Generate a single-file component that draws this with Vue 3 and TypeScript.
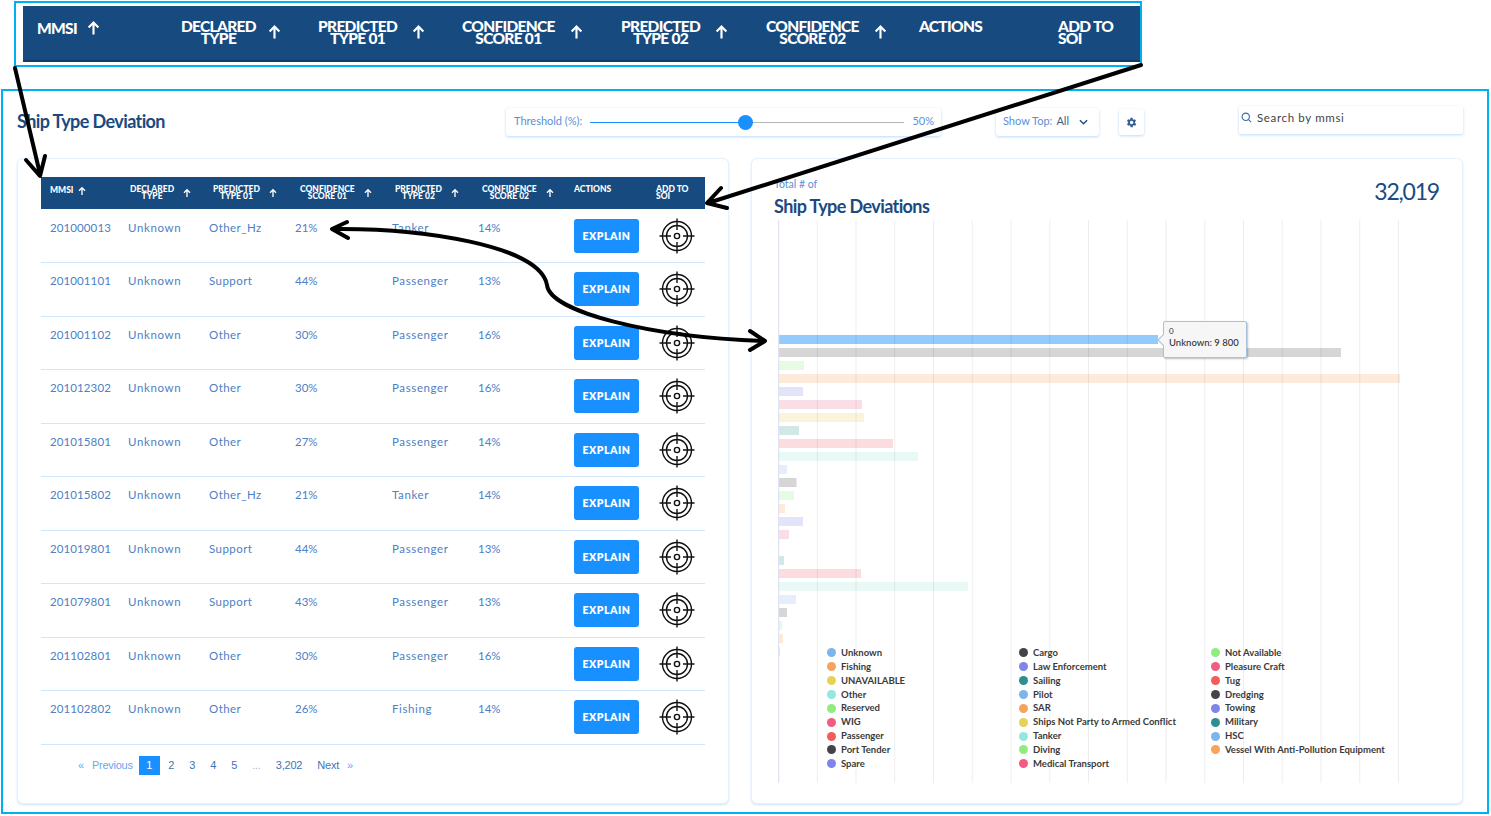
<script setup lang="ts">
interface Row {
  mmsi: string
  declared: string
  type1: string
  score1: string
  type2: string
  score2: string
}

const headers = [
  { lines: ['MMSI'], sort: true },
  { lines: ['DECLARED', 'TYPE'], sort: true },
  { lines: ['PREDICTED', 'TYPE 01'], sort: true },
  { lines: ['CONFIDENCE', 'SCORE 01'], sort: true },
  { lines: ['PREDICTED', 'TYPE 02'], sort: true },
  { lines: ['CONFIDENCE', 'SCORE 02'], sort: true },
  { lines: ['ACTIONS'], sort: false, left: true },
  { lines: ['ADD TO', 'SOI'], sort: false, left: true },
]

const rows: Row[] = [
  { mmsi: '201000013', declared: 'Unknown', type1: 'Other_Hz', score1: '21%', type2: 'Tanker', score2: '14%' },
  { mmsi: '201001101', declared: 'Unknown', type1: 'Support', score1: '44%', type2: 'Passenger', score2: '13%' },
  { mmsi: '201001102', declared: 'Unknown', type1: 'Other', score1: '30%', type2: 'Passenger', score2: '16%' },
  { mmsi: '201012302', declared: 'Unknown', type1: 'Other', score1: '30%', type2: 'Passenger', score2: '16%' },
  { mmsi: '201015801', declared: 'Unknown', type1: 'Other', score1: '27%', type2: 'Passenger', score2: '14%' },
  { mmsi: '201015802', declared: 'Unknown', type1: 'Other_Hz', score1: '21%', type2: 'Tanker', score2: '14%' },
  { mmsi: '201019801', declared: 'Unknown', type1: 'Support', score1: '44%', type2: 'Passenger', score2: '13%' },
  { mmsi: '201079801', declared: 'Unknown', type1: 'Support', score1: '43%', type2: 'Passenger', score2: '13%' },
  { mmsi: '201102801', declared: 'Unknown', type1: 'Other', score1: '30%', type2: 'Passenger', score2: '16%' },
  { mmsi: '201102802', declared: 'Unknown', type1: 'Other', score1: '26%', type2: 'Fishing', score2: '14%' },
]

const pages = ['2', '3', '4', '5']

// bar ends are page x values, the chart's zero line sits at x=778
const barEnds = [1158, 1341, 804, 1400, 803, 862, 864, 799, 893, 918, 787, 796.5, 794, 785, 803, 789, 778, 784, 861, 968, 796, 787, 782, 783, 780]
const barColors = ['#e4effb', '#d6d6d6', '#e6fbe3', '#fdeadb', '#e3e3f9', '#fbdde6', '#faf5da', '#d2e8e7', '#fbdcdf', '#e8f9f6']
const bars = barEnds.map((end, i) => ({
  y: 115 + i * 13,
  width: end - 778,
  // only the hovered bar keeps its full colour
  color: i === 0 ? '#92cbfc' : barColors[i % 10],
}))
const gridLines = Array.from({ length: 17 }, (_, i) => i * 38.75 + 0.5)

const legend: [string, string][] = [
  ['Unknown', '#7cb5ec'], ['Fishing', '#f7a35c'], ['UNAVAILABLE', '#e4d354'], ['Other', '#91e8e1'], ['Reserved', '#90ed7d'],
  ['WIG', '#f15c80'], ['Passenger', '#f45b5b'], ['Port Tender', '#434348'], ['Spare', '#8085e9'],
  ['Cargo', '#434348'], ['Law Enforcement', '#8085e9'], ['Sailing', '#2b908f'], ['Pilot', '#7cb5ec'], ['SAR', '#f7a35c'],
  ['Ships Not Party to Armed Conflict', '#e4d354'], ['Tanker', '#91e8e1'], ['Diving', '#90ed7d'], ['Medical Transport', '#f15c80'],
  ['Not Available', '#90ed7d'], ['Pleasure Craft', '#f15c80'], ['Tug', '#f45b5b'], ['Dredging', '#434348'], ['Towing', '#8085e9'],
  ['Military', '#2b908f'], ['HSC', '#7cb5ec'], ['Vessel With Anti-Pollution Equipment', '#f7a35c'],
]
</script>

<template>
  <div class="page">
    <div class="callout">
      <div class="thead thead-big">
        <div v-for="h in headers" :key="h.lines.join()" class="th">
          <span class="th-text" :class="{ left: h.left }">
            <span v-for="l in h.lines" :key="l">{{ l }}</span>
          </span>
          <svg v-if="h.sort" class="sort" viewBox="0 0 12 14">
            <path d="M6 13V2M1.500 6.500 6 2l4.500 4.500" fill="none" stroke="#fff" stroke-width="2" />
          </svg>
        </div>
      </div>
    </div>

    <div class="frame">
      <div class="toolbar">
        <h1 class="title">Ship Type Deviation</h1>
        <div class="box threshold">
          <span class="lift">Threshold (%):</span>
          <div class="slider">
            <span class="thumb"></span>
          </div>
          <span class="lift">50%</span>
        </div>
        <div class="box show-top">
          <span class="lift">Show Top:</span>
          <b class="lift">All</b>
          <svg viewBox="0 0 10 6" class="chevron">
            <path d="M1 1l4 4 4-4" fill="none" stroke="#1f4f85" stroke-width="1.600" />
          </svg>
        </div>
        <div class="box gear">
          <svg viewBox="1.150 0 24 24">
            <path
              fill="#2f5f94"
              d="M19.400 13a7.500 7.500 0 0 0 0-2l2.100-1.600-2-3.500-2.500 1a7.500 7.500 0 0 0-1.700-1L15.400 3.200h-4l-.4 2.700a7.500 7.500 0 0 0-1.700 1l-2.500-1-2 3.500L6.900 11a7.500 7.500 0 0 0 0 2l-2.100 1.600 2 3.500 2.500-1a7.500 7.500 0 0 0 1.700 1l.4 2.700h4l.4-2.700a7.500 7.500 0 0 0 1.700-1l2.500 1 2-3.500zM13.400 15.200a3.200 3.200 0 1 1 0-6.400 3.200 3.200 0 0 1 0 6.400z"
            />
          </svg>
        </div>
        <div class="box search">
          <svg viewBox="0 0 12 12" class="search-icon">
            <circle cx="5.200" cy="5.200" r="4" fill="none" stroke="#3a6ea5" stroke-width="1.200" />
            <path d="M8.200 8.200 11 11" stroke="#3a6ea5" stroke-width="1.200" />
          </svg>
          <span>Search by mmsi</span>
        </div>
      </div>

      <div class="cards">
        <section class="card table-card">
          <div class="thead thead-small">
            <div v-for="h in headers" :key="h.lines.join()" class="th">
              <span class="th-text" :class="{ left: h.left }">
                <span v-for="l in h.lines" :key="l">{{ l }}</span>
              </span>
              <svg v-if="h.sort" class="sort" viewBox="0 0 12 14">
                <path d="M6 13V2M1.500 6.500 6 2l4.500 4.500" fill="none" stroke="#fff" stroke-width="2" />
              </svg>
            </div>
          </div>
          <div v-for="r in rows" :key="r.mmsi" class="row">
            <span class="num">{{ r.mmsi }}</span>
            <span>{{ r.declared }}</span>
            <span class="type1">{{ r.type1 }}</span>
            <span class="pct">{{ r.score1 }}</span>
            <span>{{ r.type2 }}</span>
            <span class="pct">{{ r.score2 }}</span>
            <button class="explain">EXPLAIN</button>
            <svg class="target" viewBox="0 0 36 36">
              <g fill="none" stroke="#111" stroke-width="1.400">
                <circle cx="18" cy="18" r="14.500" />
                <circle cx="18" cy="18" r="10.500" />
                <circle cx="18" cy="18" r="2.600" />
                <path d="M18 0.500V12M18 24V35.500M0.500 18H12M24 18H35.500" />
              </g>
            </svg>
          </div>
          <nav class="pager">
            <span class="soft mark">«</span>
            <span class="soft prev">Previous</span>
            <span class="current">1</span>
            <span v-for="p in pages" :key="p" class="pg">{{ p }}</span>
            <span class="dots">...</span>
            <span class="last">3,202</span>
            <span class="next">Next</span>
            <span class="soft mark">»</span>
          </nav>
        </section>

        <section class="card chart-card">
          <div class="chart-head">
            <div>
              <div class="eyebrow">Total # of</div>
              <h2 class="chart-title">Ship Type Deviations</h2>
            </div>
            <div class="total">32,019</div>
          </div>
          <div class="chart">
            <svg width="640" height="564" viewBox="0 0 640 564">
              <rect v-for="b in bars" :key="b.y" x="0" :y="b.y" :width="b.width" height="9" :fill="b.color" />
              <line
                v-for="x in gridLines"
                :key="x"
                :x1="x"
                :x2="x"
                y1="0"
                y2="563"
                stroke="#000"
                stroke-opacity="0.07"
                stroke-width="1"
              />
              <line x1="0.500" x2="0.500" y1="0" y2="563" stroke="#dfe3f2" stroke-width="1.500" />
            </svg>
            <div class="tooltip">
              <div class="tip-index">0</div>
              <div class="tip-value">Unknown: 9 800</div>
            </div>
            <ul class="legend">
              <li v-for="[name, color] in legend" :key="name">
                <i :style="{ background: color }"></i>{{ name }}
              </li>
            </ul>
          </div>
        </section>
      </div>
    </div>

    <svg class="arrows" width="1491" height="816" viewBox="0 0 1491 816">
      <g fill="none" stroke="#000" stroke-width="4" stroke-linecap="round" stroke-linejoin="round">
        <path d="M15 68 40 174M26 160l14 16 5-20" />
        <path d="M1141 65 708 203M721 188l-14 15 20 5" />
        <path d="M333 229C420 228 540 245 547 285C550 312 650 337 763 341" />
        <path d="M347 222l-15 7 16 9M750 331l15 10-15 9" />
      </g>
    </svg>
  </div>
</template>

<style>
body {
  margin: 0;
  background: #fff;
}
</style>

<style scoped>
.page {
  position: relative;
  width: 1491px;
  height: 816px;
  overflow: hidden;
  padding-top: 1px;
  box-sizing: border-box;
  font-family: Lato, "Noto Sans", sans-serif;
  color: #4d80c4;
}
.callout {
  box-sizing: border-box;
  width: 1128px;
  height: 66px;
  margin-left: 14px;
  padding: 3px 0 2px 7px;
  border: 2px solid #00b0f0;
}
.thead {
  display: grid;
  background: #174a7e;
  color: #fff;
  font-weight: 900;
}
.thead-big {
  height: 56px;
  box-sizing: border-box;
  padding: 14px 0 0 14px;
  grid-template-columns: 144px 137px 144px 159px 145px 153px 139px 1fr;
  font-size: 15.500px;
  line-height: 12px;
  letter-spacing: -0.7px;
  border-bottom: 2px solid #123c68;
}
.thead-small {
  height: 32px;
  box-sizing: border-box;
  margin-bottom: 0.500px;
  padding: 8.500px 0 0 9px;
  grid-template-columns: 80px 83px 87px 95px 87px 92px 82px 1fr;
  font-size: 8.500px;
  line-height: 7.500px;
  letter-spacing: 0;
}
.th {
  display: flex;
  align-items: center;
  align-self: start;
}
.thead-big .th {
  gap: 15px;
}
.thead-big .th:nth-child(1) {
  gap: 10px;
}
.thead-big .th:nth-child(2) {
  gap: 12px;
}
.thead-small .th {
  gap: 9px;
}
.thead-small .th:first-child {
  gap: 5px;
}
.th-text {
  display: flex;
  flex-direction: column;
  align-items: center;
  white-space: nowrap;
}
.th-text.left {
  align-items: flex-start;
}
.thead-big .sort {
  width: 13px;
  height: 16px;
}
.thead-small .sort {
  width: 8px;
  height: 10px;
}

.frame {
  box-sizing: border-box;
  width: 1488px;
  height: 725px;
  margin: 22px 0 0 1px;
  padding: 15px 24px 0 14px;
  border: 2px solid #00b0f0;
}
.toolbar {
  display: flex;
  align-items: flex-start;
  height: 30px;
}
.title {
  width: 489px;
  margin: 4px 0 0;
  font-size: 18px;
  font-weight: 700;
  letter-spacing: -0.6px;
  color: #1b4a80;
}
.box {
  box-sizing: border-box;
  display: flex;
  align-items: center;
  background: #fff;
  border-radius: 3px;
  box-shadow: 0 1px 3px rgba(60, 150, 240, 0.35);
  font-size: 11px;
  color: #5b8fd8;
}
.lift {
  margin-top: -3px;
}
.threshold {
  width: 435px;
  height: 28px;
  margin-top: 2px;
  padding: 0 7px 0 8px;
  gap: 8px;
}
.slider {
  position: relative;
  flex: 1;
  height: 1px;
  margin-top: 1px;
  background: linear-gradient(to right, #1890ff 49.500%, #b5b5b5 49.500%);
}
.thumb {
  position: absolute;
  left: 148px;
  top: -7px;
  width: 15px;
  height: 15px;
  border-radius: 50%;
  background: #1890ff;
}
.show-top {
  width: 103px;
  height: 28px;
  margin: 2px 0 0 55px;
  padding-left: 7px;
  gap: 4px;
}
.show-top b {
  font-weight: 400;
  color: #3c5f8c;
}
.chevron {
  width: 9px;
  height: 6px;
  margin: -1px 0 0 6px;
}
.gear {
  justify-content: center;
  width: 25px;
  height: 26px;
  margin: 3px 0 0 20px;
}
.gear svg {
  width: 13px;
  height: 13px;
}
.search {
  width: 224px;
  height: 28px;
  margin-left: 95px;
  padding: 0 0 6px 2px;
  gap: 5px;
  border-radius: 2px;
  font-size: 11.500px;
  letter-spacing: 0.65px;
  color: #444;
}
.search-icon {
  width: 11px;
  height: 11px;
}

.cards {
  display: flex;
  gap: 22px;
  margin-top: 22px;
}
.card {
  box-sizing: border-box;
  width: 712px;
  height: 646px;
  border: 1px solid #e6f2fd;
  border-radius: 6px;
  background: #fff;
  box-shadow: 0 1px 2px rgba(80, 160, 240, 0.3);
}
.table-card {
  padding: 18px 23px 0;
}
.row {
  display: grid;
  grid-template-columns: 78px 81px 86px 97px 86px 96px 85px 1fr;
  height: 53.500px;
  box-sizing: border-box;
  padding-left: 9px;
  align-items: center;
  border-bottom: 1px solid #cfe6fb;
  font-size: 11.500px;
  letter-spacing: 0.62px;
}
.row > span {
  align-self: start;
  margin-top: 11px;
}
.row > .num {
  letter-spacing: 0.1px;
}
.row > .type1 {
  letter-spacing: 0.45px;
}
.row > .pct {
  letter-spacing: 0;
}
.explain {
  width: 65px;
  height: 34px;
  padding: 0;
  border: 0;
  border-radius: 3px;
  background: #1890ff;
  color: #fff;
  font: 800 10.500px Lato, "Noto Sans", sans-serif;
  letter-spacing: 0.5px;
}
.target {
  width: 36px;
  height: 36px;
}
.pager {
  display: flex;
  align-items: center;
  height: 19px;
  margin-top: 11px;
  padding-left: 37px;
  font-family: "Liberation Sans", Arial, sans-serif;
  font-size: 11px;
  letter-spacing: -0.2px;
  color: #3f73b8;
}
.soft {
  color: #6aa5f0;
}
.prev {
  margin: 0 6px 0 8px;
  letter-spacing: -0.25px;
}
.current {
  width: 21px;
  height: 19px;
  margin-right: 1px;
  line-height: 19px;
  text-align: center;
  background: #1890ff;
  color: #fff;
}
.pg {
  width: 21px;
  text-align: center;
}
.dots {
  width: 21px;
  margin-left: 1px;
  text-align: center;
  color: #9ab9dd;
}
.last {
  margin-left: 9px;
}
.next {
  margin: 0 8px 0 15px;
}

.chart-head {
  display: flex;
  justify-content: space-between;
  height: 61px;
  padding: 19px 23px 0 22px;
  box-sizing: border-box;
}
.eyebrow {
  font-size: 10.500px;
  line-height: 13px;
  color: #5b8fd8;
}
.chart-title {
  margin: 5px 0 0;
  font-size: 18px;
  line-height: 20px;
  font-weight: 700;
  letter-spacing: -0.6px;
  color: #1b4a80;
}
.total {
  font-size: 23px;
  line-height: 27px;
  letter-spacing: -1.2px;
  color: #1b4a80;
}
.chart {
  position: relative;
  margin-left: 26px;
}
.chart svg {
  display: block;
}
.tooltip {
  position: absolute;
  left: 385px;
  top: 101px;
  box-sizing: border-box;
  width: 84px;
  height: 37px;
  padding: 4px 5px;
  border: 1px solid #a9c1dc;
  border-radius: 2px;
  background: #f6f6f6;
  box-shadow: 1px 1px 2px rgba(0, 0, 0, 0.25);
  font-size: 9.500px;
  line-height: 11px;
  color: #333;
}
.tooltip::before {
  content: "";
  position: absolute;
  left: -5px;
  top: 14px;
  width: 7px;
  height: 7px;
  background: #f6f6f6;
  border-left: 1px solid #a9c1dc;
  border-bottom: 1px solid #a9c1dc;
  transform: rotate(45deg);
}
.tip-index {
  font-size: 8px;
  margin-bottom: 0;
}
.tip-value {
  position: relative;
  white-space: nowrap;
  font-weight: 500;
}
.legend {
  position: absolute;
  left: 49px;
  top: 426px;
  display: grid;
  grid-template-rows: repeat(9, 13.870px);
  grid-auto-flow: column;
  grid-auto-columns: 192px;
  margin: 0;
  padding: 0;
  list-style: none;
  font-size: 9.500px;
  line-height: 13.870px;
  font-weight: 700;
  color: #3a3a3a;
  white-space: nowrap;
}
.legend li {
  display: flex;
  align-items: center;
}
.legend i {
  width: 9px;
  height: 9px;
  margin-right: 5px;
  border-radius: 50%;
}
.arrows {
  position: absolute;
  left: 0;
  top: 0;
  pointer-events: none;
}
</style>
